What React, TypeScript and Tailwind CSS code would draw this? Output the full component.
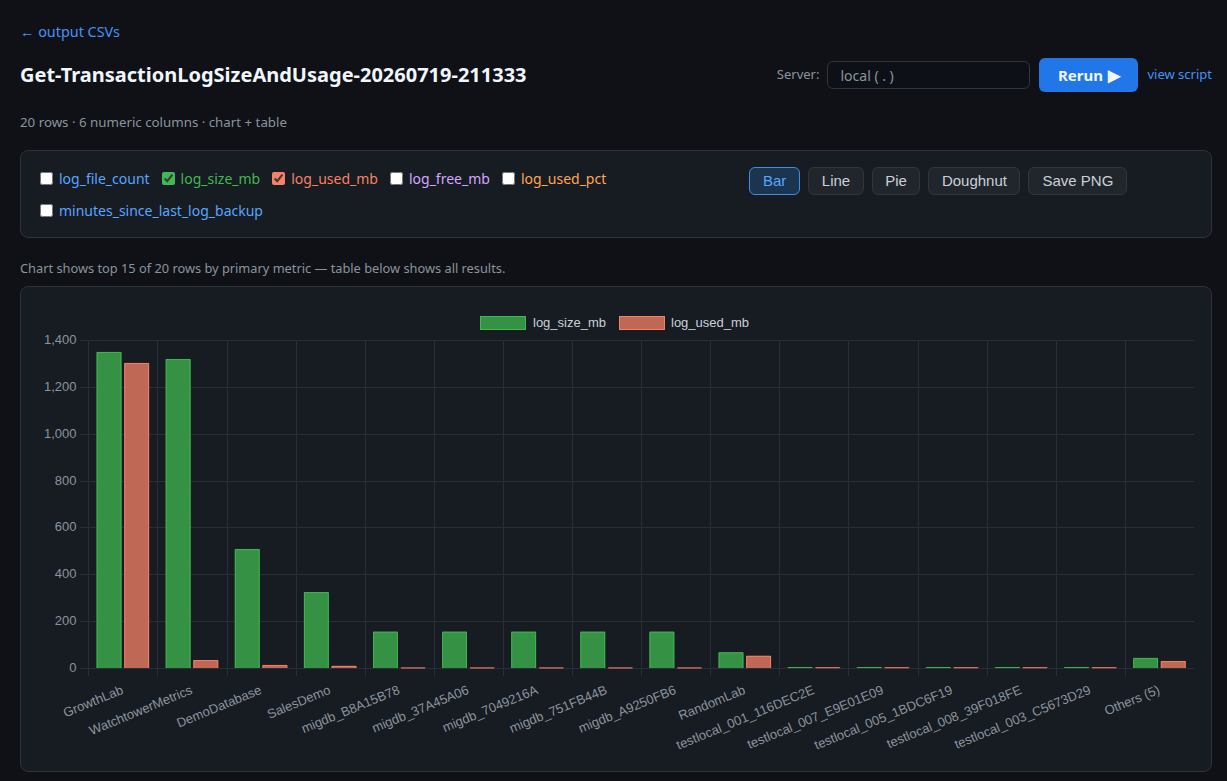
import React from "react";

const labels = [
  "GrowthLab",
  "WatchtowerMetrics",
  "DemoDatabase",
  "SalesDemo",
  "migdb_B8A15B78",
  "migdb_37A45A06",
  "migdb_7049216A",
  "migdb_751FB44B",
  "migdb_A9250FB6",
  "RandomLab",
  "testlocal_001_116DEC2E",
  "testlocal_007_E9E01E09",
  "testlocal_005_1BDC6F19",
  "testlocal_008_39F018FE",
  "testlocal_003_C5673D29",
  "Others (5)",
];
const sizeMb = [1349, 1319, 508, 324, 155, 155, 155, 155, 155, 67, 4, 4, 4, 4, 4, 43];
const usedMb = [1302, 34, 13, 9, 2, 2, 2, 2, 2, 52, 3, 3, 3, 3, 3, 30];

const X0 = 88.3;
const X1 = 1194;
const CW = (X1 - X0) / 16;
const Y0 = 668;
const YT = 340;
const SCALE = (Y0 - YT) / 1400;

function Chart() {
  const ticks = [0, 200, 400, 600, 800, 1000, 1200, 1400];
  const slot = (CW * 0.8) / 2;
  const bw = slot * 0.9;
  return (
    <svg width={1158} height={452} className="block" style={{ fontFamily: '"Liberation Sans", Arial, sans-serif' }}>
      <g transform="translate(-37,-303)">
        {/* legend */}
        <rect x={480.5} y={316.5} width={45} height={13} fill="#359245" stroke="#3fb950" strokeWidth={1} />
        <text x={533} y={323.5} fontSize={13} fill="#c9d1d9" dominantBaseline="middle">log_size_mb</text>
        <rect x={619.5} y={316.5} width={45} height={13} fill="#bf6855" stroke="#f78166" strokeWidth={1} />
        <text x={671} y={323.5} fontSize={13} fill="#c9d1d9" dominantBaseline="middle">log_used_mb</text>

        {/* horizontal grid */}
        {ticks.map((t) => {
          const y = Math.round(Y0 - t * SCALE) + 0.5;
          return (
            <g key={t}>
              <line x1={80} x2={X1} y1={y} y2={y} stroke="#282d36" strokeWidth={1} />
              <text x={76.5} y={y} fontSize={13} fill="#8b949e" textAnchor="end" dominantBaseline="middle">
                {t.toLocaleString("en-US")}
              </text>
            </g>
          );
        })}
        {/* vertical grid */}
        {labels.map((_, i) => {
          const x = Math.round(X0 + i * CW) + 0.5;
          return <line key={i} x1={x} x2={x} y1={YT} y2={676} stroke="#282d36" strokeWidth={1} />;
        })}

        {/* bars */}
        {labels.map((_, i) => {
          const gx = X0 + i * CW + CW * 0.1;
          const h1 = sizeMb[i] * SCALE;
          const h2 = usedMb[i] * SCALE;
          const bx1 = gx + (slot - bw) / 2;
          const bx2 = gx + slot + (slot - bw) / 2;
          return (
            <g key={i}>
              <rect x={bx1} y={Y0 - h1} width={bw} height={h1} fill="#359245" />
              <path
                d={`M${bx1 + 0.5},${Y0} V${Y0 - h1 + 0.5} H${bx1 + bw - 0.5} V${Y0}`}
                fill="none"
                stroke="#3fb950"
                strokeWidth={1}
                opacity={0.9}
              />
              <rect x={bx2} y={Y0 - h2} width={bw} height={h2} fill="#bf6855" />
              <path
                d={`M${bx2 + 0.5},${Y0} V${Y0 - h2 + 0.5} H${bx2 + bw - 0.5} V${Y0}`}
                fill="none"
                stroke="#f78166"
                strokeWidth={1}
                opacity={0.9}
              />
            </g>
          );
        })}

        {/* x labels */}
        {labels.map((l, i) => {
          const cx = X0 + i * CW + CW / 2;
          const y = 690;
          return (
            <text
              key={l}
              x={cx}
              y={y}
              fontSize={13}
              fill="#8b949e"
              textAnchor="end"
              dominantBaseline="middle"
              transform={`rotate(-22.5 ${cx} ${y})`}
            >
              {l}
            </text>
          );
        })}
      </g>
    </svg>
  );
}

const metrics = [
  { name: "log_file_count", color: "text-[#58a6ff]", checked: false, accent: "accent-[#58a6ff]" },
  { name: "log_size_mb", color: "text-[#3fb950]", checked: true, accent: "accent-[#3fb950]" },
  { name: "log_used_mb", color: "text-[#f78166]", checked: true, accent: "accent-[#f78166]" },
  { name: "log_free_mb", color: "text-[#d2a8ff]", checked: false, accent: "accent-[#d2a8ff]" },
  { name: "log_used_pct", color: "text-[#ffa657]", checked: false, accent: "accent-[#ffa657]" },
  { name: "minutes_since_last_log_backup", color: "text-[#58a6ff]", checked: false, accent: "accent-[#58a6ff]" },
];

export default function App() {
  return (
    <div
      className="min-h-[781px] bg-[#0f1116] pl-5 pr-[15px] pt-5 pb-2 text-[#e6edf3]"
      style={{ fontFamily: '"Noto Sans", "Open Sans", sans-serif' }}
    >
      <a className="block text-[14.4px] leading-6 text-[#4493f8]">← output CSVs</a>

      <div className="mt-[14px] flex h-[34px] items-center justify-between">
        <h1 className="text-[20px] font-bold leading-7 text-[#f0f6fc]">Get-TransactionLogSizeAndUsage-20260719-211333</h1>
        <div className="flex items-center">
          <span className="text-[13px] text-[#8b949e]">Server:</span>
          <div className="ml-2 flex h-[28px] w-[203px] items-center rounded-md border border-[#30363d] bg-[#0d1117] px-3 text-[14px] text-[#8b949e]">
            local ( . )
          </div>
          <button className="ml-[9px] flex h-[34px] w-[99px] items-center justify-center gap-[5px] rounded-md bg-[#2176e8] text-[15px] font-bold text-[#f0f6fc]">
            Rerun <span className="text-[16px] leading-none">▶</span>
          </button>
          <a className="ml-[9px] text-[13px] text-[#4493f8]">view script</a>
        </div>
      </div>

      <p className="mt-5 text-[13.3px] leading-5 text-[#8b949e]">20 rows · 6 numeric columns · chart + table</p>

      <div className="mt-[18px] flex h-[88px] rounded-lg border border-[#2d333b] bg-[#171b22] pl-[19px] pt-[15px]">
        <div className="flex w-[709px] shrink-0 flex-wrap content-start gap-x-3 gap-y-2">
          {metrics.map((m) => (
            <label key={m.name} className="flex h-6 items-center gap-[6px]">
              <input type="checkbox" defaultChecked={m.checked} className={`h-[13px] w-[13px] ${m.accent}`} />
              <span className={`text-[14px] ${m.color}`}>{m.name}</span>
            </label>
          ))}
        </div>
        <div className="mt-px flex gap-2" style={{ fontFamily: '"Liberation Sans", Arial, sans-serif' }}>
          <button className="h-[28px] rounded-md border border-[#3a8ee6] bg-[#1b3550] px-[13px] text-[15px] text-[#58a6ff]">Bar</button>
          <button className="h-[28px] rounded-md border border-[#30363d] bg-[#21262d] px-[12.5px] text-[15px] text-[#c9d1d9]">Line</button>
          <button className="h-[28px] rounded-md border border-[#30363d] bg-[#21262d] px-[12.5px] text-[15px] text-[#c9d1d9]">Pie</button>
          <button className="h-[28px] rounded-md border border-[#30363d] bg-[#21262d] px-[12.5px] text-[15px] text-[#c9d1d9]">Doughnut</button>
          <button className="h-[28px] rounded-md border border-[#30363d] bg-[#21262d] px-[13px] text-[15px] text-[#c9d1d9]">Save PNG</button>
        </div>
      </div>

      <p className="mt-5 text-[12.8px] leading-5 text-[#8b949e]">
        Chart shows top 15 of 20 rows by primary metric — table below shows all results.
      </p>

      <div className="mt-2 h-[486px] rounded-lg border border-[#2d333b] bg-[#171b22] p-4">
        <Chart />
      </div>
    </div>
  );
}
